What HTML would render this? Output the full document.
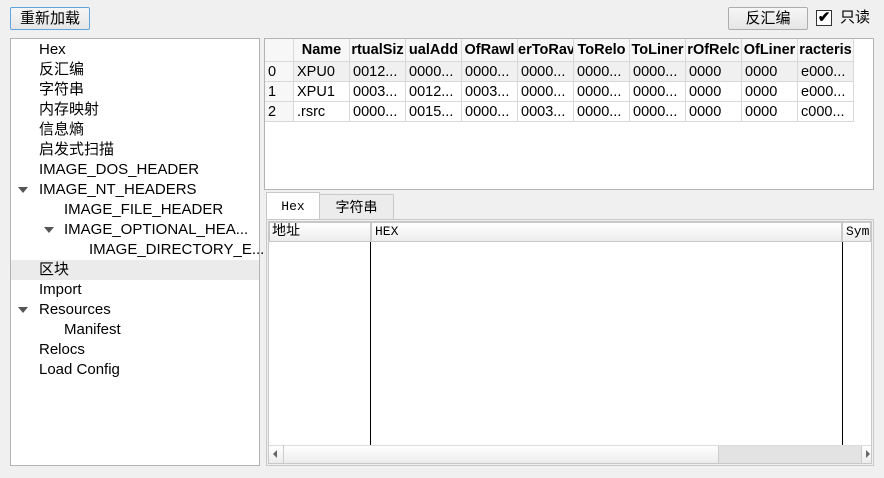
<!DOCTYPE html>
<html><head><meta charset="utf-8"><style>
*{box-sizing:border-box;margin:0;padding:0}
body{width:884px;height:478px;background:#f0f0f0;font-family:"Liberation Sans","Noto Sans CJK SC",sans-serif;font-size:15px;color:#000;position:relative;overflow:hidden}
.abs{position:absolute}
.btn{border:1px solid #adadad;background:linear-gradient(#f6f6f6,#e6e6e6);border-radius:2px;text-align:center;line-height:21px;font-size:15px}
.tree{left:10px;top:38px;width:250px;height:428px;background:#fff;border:1px solid #b4b4b4}
.row{position:absolute;height:20px;line-height:22px;white-space:nowrap}
.tri{position:absolute;width:0;height:0;border-left:5px solid transparent;border-right:5px solid transparent;border-top:6px solid #555}
.tbl{left:264px;top:38px;width:610px;height:152px;background:#fff;border:1px solid #b4b4b4}
.c{position:absolute;height:20px;line-height:20px;font-size:14.5px;padding-left:3px;border-right:1px solid #d8d8d8;border-bottom:1px solid #d8d8d8;overflow:hidden;white-space:nowrap}
.h{position:absolute;top:0;height:23px;line-height:22px;font-weight:bold;font-size:14.5px;background:#f7f7f7;border-right:1px solid #d8d8d8;border-bottom:1px solid #d8d8d8;overflow:hidden;white-space:nowrap;text-align:center}
.mono{font-family:"Liberation Mono","Noto Sans CJK SC",monospace;font-size:13px}
</style></head><body>
<div class="abs btn" style="left:10px;top:7px;width:80px;height:23px;border-color:#5fa3e0">重新加载</div>
<div class="abs btn" style="left:728px;top:7px;width:80px;height:23px">反汇编</div>
<div class="abs" style="left:816px;top:10px;width:16px;height:16px;border:1px solid #333;background:#fff;font-size:15px;line-height:14px;text-align:center;font-weight:bold">✔</div>
<div class="abs" style="left:840px;top:8px;line-height:20px">只读</div>

<div class="abs tree">
<div class="row" style="left:28px;top:0">Hex</div>
<div class="row" style="left:28px;top:20px">反汇编</div>
<div class="row" style="left:28px;top:40px">字符串</div>
<div class="row" style="left:28px;top:60px">内存映射</div>
<div class="row" style="left:28px;top:80px">信息熵</div>
<div class="row" style="left:28px;top:100px">启发式扫描</div>
<div class="row" style="left:28px;top:120px">IMAGE_DOS_HEADER</div>
<div class="tri" style="left:7px;top:148px"></div>
<div class="row" style="left:28px;top:140px">IMAGE_NT_HEADERS</div>
<div class="row" style="left:53px;top:160px">IMAGE_FILE_HEADER</div>
<div class="tri" style="left:33px;top:188px"></div>
<div class="row" style="left:53px;top:180px">IMAGE_OPTIONAL_HEA...</div>
<div class="row" style="left:78px;top:200px">IMAGE_DIRECTORY_E...</div>
<div class="row" style="left:0;top:221px;width:248px;background:#ebebeb;padding-left:28px;line-height:20px">区块</div>
<div class="row" style="left:28px;top:240px">Import</div>
<div class="tri" style="left:7px;top:268px"></div>
<div class="row" style="left:28px;top:260px">Resources</div>
<div class="row" style="left:53px;top:280px">Manifest</div>
<div class="row" style="left:28px;top:300px">Relocs</div>
<div class="row" style="left:28px;top:320px">Load Config</div>
</div>

<div class="abs tbl">
<div class="h" style="left:0;width:29px"></div>
<div class="h" style="left:29px;width:56px">Name</div>
<div class="h" style="left:85px;width:56px">rtualSiz</div>
<div class="h" style="left:141px;width:56px">ualAdd</div>
<div class="h" style="left:197px;width:56px">OfRawl</div>
<div class="h" style="left:253px;width:56px">erToRav</div>
<div class="h" style="left:309px;width:56px">ToRelo</div>
<div class="h" style="left:365px;width:56px">ToLiner</div>
<div class="h" style="left:421px;width:56px">rOfRelc</div>
<div class="h" style="left:477px;width:56px">OfLiner</div>
<div class="h" style="left:533px;width:56px">racteris</div>
<div id="rows"></div>
</div>
<script>
var d=[["0","XPU0","0012...","0000...","0000...","0000...","0000...","0000...","0000","0000","e000..."],
["1","XPU1","0003...","0012...","0003...","0000...","0000...","0000...","0000","0000","e000..."],
["2",".rsrc","0000...","0015...","0000...","0003...","0000...","0000...","0000","0000","c000..."]];
var h="";var x=[0,29,85,141,197,253,309,365,421,477,533],w=[29,56,56,56,56,56,56,56,56,56,56];
d.forEach(function(r,i){r.forEach(function(v,j){h+='<div class="c" style="top:'+(23+i*20)+'px;left:'+x[j]+'px;width:'+w[j]+'px;'+(i==0?'background:#f0f0f0;':'')+(j==0?'background:#f7f7f7;':'')+'">'+v+'</div>'})});
document.getElementById("rows").innerHTML=h;
</script>

<div class="abs mono" style="left:266px;top:192px;width:54px;height:28px;background:#fff;border:1px solid #c8c8c8;border-bottom:none;text-align:center;line-height:28px">Hex</div>
<div class="abs" style="left:319px;top:194px;width:75px;height:25px;background:#ececec;border:1px solid #c8c8c8;border-bottom:none;text-align:center;line-height:24px;font-size:14px">字符串</div>
<div class="abs" style="left:266px;top:219px;width:608px;height:247px;border:1px solid #c8c8c8;background:#f0f0f0"></div>
<div class="abs" style="left:268px;top:221px;width:604px;height:243px;background:#fff;border:1px solid #c8c8c8"></div>
<div class="abs mono" style="left:269px;top:222px;width:102px;height:20px;background:linear-gradient(#fff,#ededed);border:1px solid #c8c8c8;line-height:18px;padding-left:2px;font-size:14px">地址</div>
<div class="abs mono" style="left:371px;top:222px;width:471px;height:20px;background:linear-gradient(#fff,#ededed);border:1px solid #c8c8c8;line-height:18px;padding-left:3px">HEX</div>
<div class="abs mono" style="left:842px;top:222px;width:29px;height:20px;background:linear-gradient(#fff,#ededed);border:1px solid #c8c8c8;line-height:18px;padding-left:3px;overflow:hidden">Sym</div>
<div class="abs" style="left:370px;top:242px;width:1px;height:203px;background:#000"></div>
<div class="abs" style="left:842px;top:242px;width:1px;height:203px;background:#000"></div>
<div class="abs" style="left:269px;top:445px;width:602px;height:18px;background:linear-gradient(#fff,#ececec);border-top:1px solid #ddd"></div>
<div class="abs" style="left:283px;top:445px;width:1px;height:18px;background:#ccc"></div>
<div class="abs" style="left:718px;top:446px;width:144px;height:17px;background:#e3e3e3;border-left:1px solid #ccc;border-right:1px solid #ccc"></div>
<div class="abs" style="left:273px;top:450px;width:0;height:0;border-top:4px solid transparent;border-bottom:4px solid transparent;border-right:4px solid #666"></div>
<div class="abs" style="left:866px;top:450px;width:0;height:0;border-top:4px solid transparent;border-bottom:4px solid transparent;border-left:4px solid #666"></div>
</body></html>
